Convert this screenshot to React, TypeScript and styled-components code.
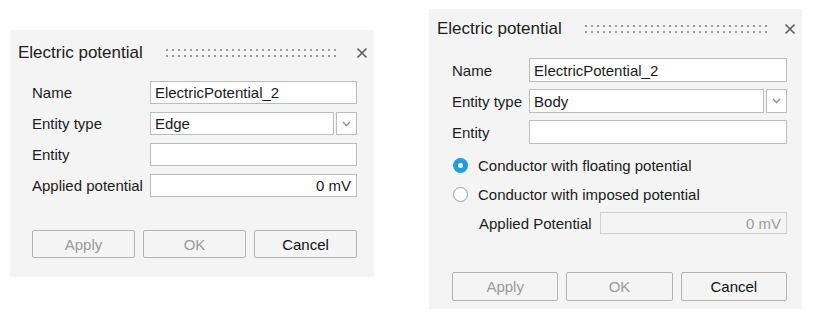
import React from "react";
import styled, { createGlobalStyle } from "styled-components";

const GlobalStyle = createGlobalStyle`
  html, body {
    margin: 0;
    padding: 0;
    background: #ffffff;
    font-family: "Liberation Sans", Arial, sans-serif;
    color: #1b1b1b;
  }
`;

const Page = styled.div`
  display: flex;
  align-items: flex-start;
  width: 813px;
  height: 318px;
  padding-left: 10px;
  gap: 55px;
  box-sizing: border-box;
`;

const Panel = styled.div<{ $width: number; $height: number; $top: number }>`
  display: flex;
  flex-direction: column;
  width: ${(p) => p.$width}px;
  height: ${(p) => p.$height}px;
  margin-top: ${(p) => p.$top}px;
  background: #f4f4f4;
  box-sizing: border-box;
`;

const Header = styled.div<{ $height: number }>`
  display: flex;
  align-items: center;
  height: ${(p) => p.$height}px;
  padding: 0 6px 0 8px;
  flex-shrink: 0;
`;

const Title = styled.span`
  font-size: 17px;
  color: #202020;
  white-space: nowrap;
`;

const Grip = styled.div<{ $right: number }>`
  flex: 1;
  height: 12px;
  margin: 0 ${(p) => p.$right}px 0 21px;
  background-image: radial-gradient(circle, #9c9c9c 1px, transparent 1.5px);
  background-size: 6px 6px;
  background-position: 0 0;
`;

const CloseButton = styled.button`
  display: flex;
  align-items: center;
  justify-content: center;
  width: 12px;
  height: 12px;
  padding: 0;
  border: none;
  background: transparent;
`;

const Body = styled.div<{ $padLeft: number; $padRight: number; $padTop: number }>`
  display: flex;
  flex-direction: column;
  flex: 1;
  padding: ${(p) => p.$padTop}px ${(p) => p.$padRight}px 0 ${(p) => p.$padLeft}px;
`;

const FormGrid = styled.div<{ $rowHeight: number; $gap: number }>`
  display: grid;
  grid-template-columns: max-content 1fr;
  grid-auto-rows: ${(p) => p.$rowHeight}px;
  column-gap: 7px;
  row-gap: ${(p) => p.$gap}px;
  align-items: center;
`;

const Label = styled.span`
  font-size: 15px;
  white-space: nowrap;
`;

const TextField = styled.div<{ $align?: "left" | "right"; $disabled?: boolean }>`
  display: flex;
  align-items: center;
  justify-content: ${(p) => (p.$align === "right" ? "flex-end" : "flex-start")};
  height: 100%;
  padding: 0 5px 0 4px;
  background: ${(p) => (p.$disabled ? "#f4f4f4" : "#ffffff")};
  border: 1px solid ${(p) => (p.$disabled ? "#cfcfcf" : "#bdbdbd")};
  box-sizing: border-box;
  font-size: 15px;
  color: ${(p) => (p.$disabled ? "#9c9c9c" : "#1b1b1b")};
  white-space: nowrap;
`;

const SelectWrap = styled.div`
  display: flex;
  height: 100%;
  gap: 2px;
`;

const SelectValue = styled(TextField)`
  flex: 1;
`;

const SelectArrow = styled.div`
  display: flex;
  align-items: center;
  justify-content: center;
  width: 21px;
  height: 100%;
  background: #ffffff;
  border: 1px solid #bdbdbd;
  box-sizing: border-box;
`;

const RadioGroup = styled.div`
  display: flex;
  flex-direction: column;
  gap: 7px;
  margin-top: 10px;
`;

const RadioRow = styled.div`
  display: flex;
  align-items: center;
  gap: 10px;
  height: 22px;
  padding-left: 1px;
  font-size: 15px;
`;

const RadioDot = styled.span<{ $checked?: boolean }>`
  display: inline-flex;
  align-items: center;
  justify-content: center;
  width: 15px;
  height: 15px;
  border-radius: 50%;
  box-sizing: border-box;
  background: ${(p) => (p.$checked ? "#1b9fe2" : "#ffffff")};
  border: ${(p) => (p.$checked ? "none" : "1.5px solid #9d9d9d")};

  &::after {
    content: "";
    display: ${(p) => (p.$checked ? "block" : "none")};
    width: 5px;
    height: 5px;
    border-radius: 50%;
    background: #ffffff;
  }
`;

const SubRow = styled.div`
  display: grid;
  grid-template-columns: max-content 1fr;
  column-gap: 8px;
  align-items: center;
  height: 22px;
  margin-top: 7px;
  padding-left: 27px;
`;

const Footer = styled.div<{ $height: number; $padBottom: number }>`
  display: grid;
  grid-template-columns: repeat(3, 1fr);
  gap: 8px;
  margin-top: auto;
  margin-bottom: ${(p) => p.$padBottom}px;
  height: ${(p) => p.$height}px;
`;

const Button = styled.button<{ $disabled?: boolean }>`
  height: 100%;
  background: #f4f4f4;
  border: 1px solid #b3b3b3;
  border-radius: 2px;
  font-family: "Liberation Sans", Arial, sans-serif;
  font-size: 15px;
  color: ${(p) => (p.$disabled ? "#9a9a9a" : "#111111")};
  padding: 0;
`;

const CloseIcon = () => (
  <svg width="12" height="12" viewBox="0 0 12 12">
    <path d="M1.5 1.5 L10.5 10.5 M10.5 1.5 L1.5 10.5" stroke="#5a5a5a" strokeWidth="1.6" fill="none" />
  </svg>
);

const Chevron = () => (
  <svg width="9" height="6" viewBox="0 0 9 6">
    <polyline points="1,1 4.5,4.5 8,1" stroke="#8a8a8a" strokeWidth="1.3" fill="none" />
  </svg>
);

const DialogHeader = ({ height, gripRight }: { height: number; gripRight: number }) => (
  <Header $height={height}>
    <Title>Electric potential</Title>
    <Grip $right={gripRight} />
    <CloseButton>
      <CloseIcon />
    </CloseButton>
  </Header>
);

const EntitySelect = ({ value }: { value: string }) => (
  <SelectWrap>
    <SelectValue>{value}</SelectValue>
    <SelectArrow>
      <Chevron />
    </SelectArrow>
  </SelectWrap>
);

const Buttons = ({ height, padBottom }: { height: number; padBottom: number }) => (
  <Footer $height={height} $padBottom={padBottom}>
    <Button $disabled>Apply</Button>
    <Button $disabled>OK</Button>
    <Button>Cancel</Button>
  </Footer>
);

function App() {
  return (
    <>
      <GlobalStyle />
      <Page>
        <Panel $width={364} $height={247} $top={30}>
          <DialogHeader height={46} gripRight={18} />
          <Body $padLeft={22} $padRight={17} $padTop={5}>
            <FormGrid $rowHeight={23} $gap={8}>
              <Label>Name</Label>
              <TextField>ElectricPotential_2</TextField>
              <Label>Entity type</Label>
              <EntitySelect value="Edge" />
              <Label>Entity</Label>
              <TextField />
              <Label>Applied potential</Label>
              <TextField $align="right">0 mV</TextField>
            </FormGrid>
            <Buttons height={28} padBottom={19} />
          </Body>
        </Panel>

        <Panel $width={373} $height={300} $top={9}>
          <DialogHeader height={40} gripRight={16} />
          <Body $padLeft={23} $padRight={15} $padTop={9}>
            <FormGrid $rowHeight={24} $gap={7}>
              <Label>Name</Label>
              <TextField>ElectricPotential_2</TextField>
              <Label>Entity type</Label>
              <EntitySelect value="Body" />
              <Label>Entity</Label>
              <TextField />
            </FormGrid>
            <RadioGroup>
              <RadioRow>
                <RadioDot $checked />
                Conductor with floating potential
              </RadioRow>
              <RadioRow>
                <RadioDot />
                Conductor with imposed potential
              </RadioRow>
            </RadioGroup>
            <SubRow>
              <Label>Applied Potential</Label>
              <TextField $align="right" $disabled>
                0 mV
              </TextField>
            </SubRow>
            <Buttons height={29} padBottom={8} />
          </Body>
        </Panel>
      </Page>
    </>
  );
}

export default App;
